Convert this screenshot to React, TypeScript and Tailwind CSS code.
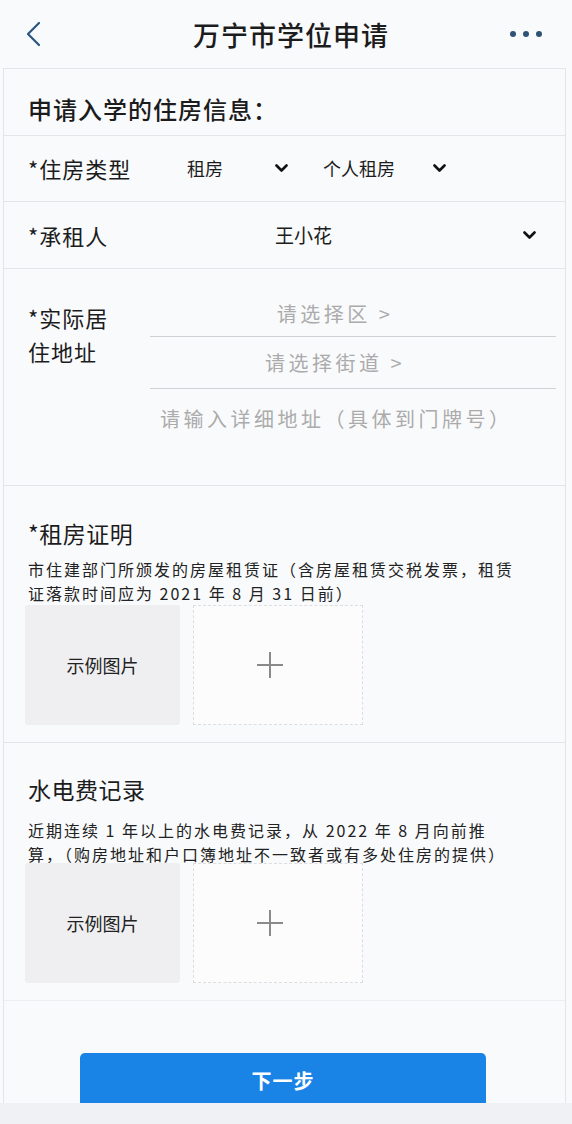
import { ChangeEvent } from "react";

const cjk = "font-['Noto_Sans_CJK_SC','Noto_Sans',sans-serif]";

function ChevronDown() {
  return (
    <svg width="13" height="9" viewBox="0 0 13 9" fill="none">
      <polyline
        points="1.5,1.5 6.5,6.5 11.5,1.5"
        stroke="#111"
        strokeWidth="2.6"
        strokeLinecap="round"
        strokeLinejoin="round"
      />
    </svg>
  );
}

function UploadRow() {
  return (
    <div className="flex gap-[11px] ml-[-3px]">
      <div className="w-[155px] h-[120px] bg-[#efeff1] rounded-[3px] flex items-center justify-center text-[18px] text-[#222]">
        示例图片
      </div>
      <div className="w-[170px] h-[120px] ml-[2px] bg-[#fcfcfd] border border-dashed border-[#dcdde0] flex items-center justify-center pr-[16px]">
        <svg width="28" height="28" viewBox="0 0 28 28">
          <path d="M14 1v26M1 14h26" stroke="#8a8a8a" strokeWidth="2" />
        </svg>
      </div>
    </div>
  );
}

export default function App() {
  const noop = (_e: ChangeEvent<HTMLInputElement>) => {};

  return (
    <div className={`w-[572px] h-[1124px] overflow-hidden bg-[#f9fafc] flex flex-col text-[#1c1c1c] ${cjk}`}>
      {/* top bar */}
      <header className="h-[68px] shrink-0 flex items-center pl-[24px] pr-[30px]">
        <div className="w-[56px] flex items-center">
          <svg width="18" height="28" viewBox="0 0 18 28" fill="none">
            <polyline
              points="15,3 4,14 15,25"
              stroke="#2a5580"
              strokeWidth="2.2"
              strokeLinecap="round"
              strokeLinejoin="round"
            />
          </svg>
        </div>
        <h1 className="flex-1 text-center text-[27px] font-medium tracking-[1px] leading-none">万宁市学位申请</h1>
        <div className="w-[40px] flex items-center justify-end gap-[7px]">
          <span className="w-[6px] h-[6px] rounded-full bg-[#2f5277]" />
          <span className="w-[6px] h-[6px] rounded-full bg-[#2f5277]" />
          <span className="w-[6px] h-[6px] rounded-full bg-[#2f5277]" />
        </div>
      </header>

      <main className="ml-[3px] mr-[6px] flex-1 flex flex-col border-x border-t border-[#e3e5e9] bg-[#f9fafc]">
        <section className="h-[67px] shrink-0 flex items-center pt-[13px] pl-[24px] border-b border-[#e3e5e9]">
          <h2 className="text-[24px] font-medium tracking-[1px]">申请入学的住房信息：</h2>
        </section>

        {/* housing type */}
        <section className="h-[66px] shrink-0 flex items-center pl-[24px] border-b border-[#e3e5e9]">
          <span className="w-[159px] text-[22px] tracking-[1px]">*住房类型</span>
          <div className="w-[101px] flex items-center justify-between text-[18px]">
            <span>租房</span>
            <ChevronDown />
          </div>
          <div className="ml-[35px] w-[123px] flex items-center justify-between text-[18px]">
            <span>个人租房</span>
            <ChevronDown />
          </div>
        </section>

        {/* tenant */}
        <section className="h-[67px] shrink-0 flex items-center pl-[24px] pr-[29px] border-b border-[#e3e5e9]">
          <span className="w-[247px] text-[22px] tracking-[1px]">*承租人</span>
          <span className="flex-1 text-[19px]">王小花</span>
          <ChevronDown />
        </section>

        {/* address */}
        <section className="h-[217px] shrink-0 flex pl-[24px] pr-[9px] border-b border-[#e3e5e9]">
          <div className="w-[122px] pt-[31px] text-[22px] leading-[34px] tracking-[1px]">
            *实际居
            <br />
            住地址
          </div>
          <div className="flex-1 flex flex-col pt-[22px] text-[20px] tracking-[3.5px] text-[#ababab]">
            <div className="h-[46px] flex items-center justify-center pr-[36px] border-b border-[#cfd1d5]">
              请选择区 &gt;
            </div>
            <div className="h-[52px] flex items-center justify-center pr-[36px] border-b border-[#cfd1d5]">
              请选择街道 &gt;
            </div>
            <input
              className="h-[58px] pl-[10px] bg-transparent outline-none placeholder:text-[#ababab]"
              placeholder="请输入详细地址（具体到门牌号）"
              onChange={noop}
            />
          </div>
        </section>

        {/* rental proof */}
        <section className="h-[257px] shrink-0 pt-[31px] pl-[24px] border-b border-[#e3e5e9]">
          <h3 className="text-[23px] leading-[32px] tracking-[0.5px]">*租房证明</h3>
          <p className="mt-[8px] text-[16px] leading-[24px] tracking-[2px] text-[#222]">
            市住建部门所颁发的房屋租赁证（含房屋租赁交税发票，租赁
            <br />
            证落款时间应为 2021 年 8 月 31 日前）
          </p>
          <UploadRow />
        </section>

        {/* utility bills */}
        <section className="h-[258px] shrink-0 pt-[30px] pl-[24px] border-b border-[#eceef1]">
          <h3 className="text-[23px] leading-[32px] tracking-[0.5px]">水电费记录</h3>
          <p className="mt-[13px] mb-[-3px] text-[16px] leading-[24px] tracking-[2px] text-[#222]">
            近期连续 1 年以上的水电费记录，从 2022 年 8 月向前推
            <br />
            算，（购房地址和户口簿地址不一致者或有多处住房的提供）
          </p>
          <UploadRow />
        </section>

        <div className="flex-1 flex items-end justify-center overflow-hidden">
          <button className="w-[406px] h-[50px] ml-[-3px] rounded-t-[5px] bg-[#1a83e6] text-white text-[20px] font-bold tracking-[1px] pt-[6px]">
            下一步
          </button>
        </div>
      </main>

      <div className="h-[21px] shrink-0 bg-[#eff1f4]" />
    </div>
  );
}
